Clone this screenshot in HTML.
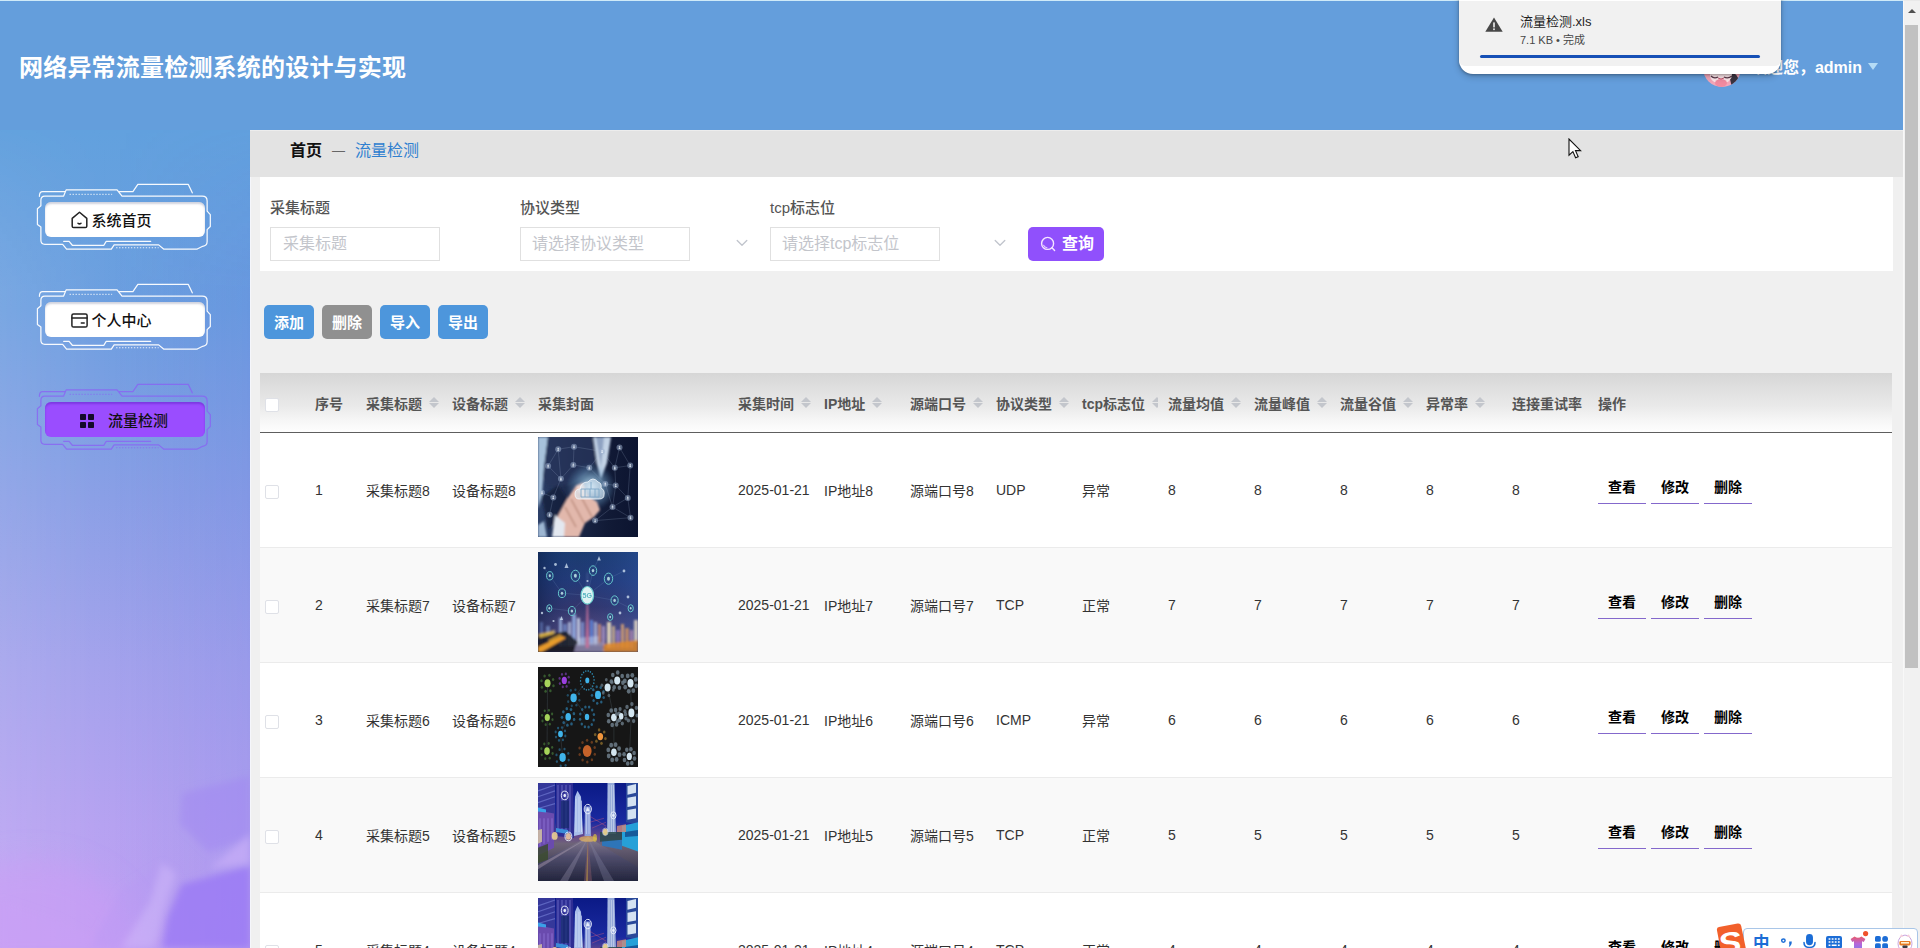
<!DOCTYPE html>
<html lang="zh-CN">
<head>
<meta charset="utf-8">
<title>网络异常流量检测系统的设计与实现</title>
<style>
*{box-sizing:border-box;margin:0;padding:0}
html,body{width:1920px;height:948px;overflow:hidden;background:#f0f0f0}
body{position:relative;font-family:"Liberation Sans","Noto Sans CJK SC",sans-serif;font-size:14px;color:#333}
.abs{position:absolute}
/* header */
#header{position:absolute;left:0;top:0;width:1903px;height:130px;background:#649edc;border-top:1px solid #cfeaf8}
#title{position:absolute;left:19px;top:49px;font-size:24px;line-height:36px;font-weight:700;color:#fff;white-space:nowrap;letter-spacing:.2px}
#user{position:absolute;right:41px;top:49px;height:36px;line-height:36px;font-size:16px;font-weight:700;color:#fff;white-space:nowrap}
#avatar{position:absolute;left:1702px;top:47px;width:40px;height:40px}
#caret{position:absolute;left:1868px;top:62px;width:0;height:0;border-left:5.5px solid transparent;border-right:5.5px solid transparent;border-top:7.5px solid #b5dcf6}
/* sidebar */
#side{position:absolute;left:0;top:130px;width:250px;height:818px;overflow:hidden;background:linear-gradient(180deg,#62a1de 0%,#6d9fe0 22%,#8a9fe6 45%,#a3a2ec 65%,#b6a2f1 85%,#bf9ff3 100%)}
#side .shade{position:absolute;left:0;top:0;width:250px;height:818px;background:linear-gradient(90deg,rgba(255,255,255,.09) 0%,rgba(255,255,255,0) 45%,rgba(70,90,220,.10) 100%);-webkit-mask-image:linear-gradient(180deg,rgba(0,0,0,.15) 0,#000 160px);mask-image:linear-gradient(180deg,rgba(0,0,0,.15) 0,#000 160px)}
.menu{position:absolute;left:30px;width:190px;height:80px}
.menu svg.frame{position:absolute;left:0;top:0;width:190px;height:80px}
.menu .box{position:absolute;left:15px;top:27px;width:160px;height:35px;border-radius:6px;background:#fff;box-shadow:inset 0 2px 2px rgba(120,130,160,.35)}
.menu .txt{position:absolute;top:28px;height:35px;line-height:35px;font-size:15px;color:#111;font-weight:500;white-space:nowrap}
.menu svg.ico{position:absolute}
.menu.act .box{background:#9a4dff;box-shadow:inset 0 2px 2px rgba(90,30,190,.45)}
/* main */
#crumb{position:absolute;left:250px;top:130px;width:1653px;height:47px;background:#e3e3e3;border-top:1px solid #ededed}
#crumb span{position:absolute;top:8px;line-height:24px;font-size:16px;white-space:nowrap}
#search{position:absolute;left:260px;top:177px;width:1633px;height:94px;background:#fff}
.lab{position:absolute;top:20px;font-size:15px;line-height:22px;color:#555;font-weight:500;white-space:nowrap}
.inp{position:absolute;top:50px;width:170px;height:34px;border:1px solid #e0e0e0;background:#fff;color:#c3c5cb;font-size:16px;line-height:31px;padding-left:12px;white-space:nowrap;overflow:hidden}
.arr{position:absolute;top:62px;width:12px;height:8px}
#query{position:absolute;left:768px;top:50px;width:76px;height:34px;border-radius:5px;background:#9050fc;color:#fff;font-size:16px;font-weight:700;line-height:34px;white-space:nowrap}
.btn{position:absolute;top:305px;width:50px;height:34px;border-radius:5px;background:#4d96dc;color:#fff;font-size:15px;font-weight:700;line-height:36px;text-align:center;white-space:nowrap}
/* table */
#tbl{position:absolute;left:260px;top:373px;width:1632px;border-collapse:collapse;table-layout:fixed;background:#fff}
#tbl th{height:59px;padding:1px 0 0 10px;text-align:left;font-size:14px;font-weight:700;color:#555;white-space:nowrap;overflow:hidden;position:relative}
#tbl thead tr{background:linear-gradient(180deg,#d6d6d6 0%,#dfdfdf 25%,#e9e9e9 55%,#f7f7f7 82%,#fefefe 100%)}
#tbl thead{border-bottom:1px solid #5e5e5e}
#tbl td{height:115px;padding:0 0 0 10px;font-size:14px;color:#333;white-space:nowrap;overflow:hidden;border-bottom:1px solid #ebebeb;vertical-align:middle}
#tbl tbody tr:nth-child(even) td{background:#f9f9f9}
.cb{display:block;width:14px;height:14px;border:1px solid #dfe1e7;border-radius:2px;background:#fff;margin-left:-5px;position:relative;top:2px}
.sort{display:inline-block;position:relative;width:10px;height:12px;margin-left:7px;vertical-align:0}
.sort:before,.sort:after{content:"";position:absolute;left:0;border-left:5px solid transparent;border-right:5px solid transparent}
.sort:before{top:0;border-bottom:5px solid #c3c6cc}
.sort:after{top:6.5px;border-top:5px solid #c3c6cc}
.pic{display:block;width:100px;height:100px;margin-top:-6px}
.op{display:inline-block;width:48px;height:34px;margin-right:5px;border-bottom:1px solid #8468cc;color:#000;font-weight:700;font-size:14px;line-height:34px;text-align:center;position:relative;top:-3px}
/* scrollbar */
#sb{position:absolute;left:1903px;top:0;width:17px;height:948px;background:#f1f1f1;border-left:1px solid #f8f8f8;border-top:1px solid #e9e9e9}
#sb .thumb{position:absolute;left:1px;top:24px;width:13px;height:643px;background:#c1c1c1}
#sb .up{position:absolute;left:3.5px;top:7.5px;width:0;height:0;border-left:4px solid transparent;border-right:4px solid transparent;border-bottom:4.5px solid #505050}
/* download bubble */
#dl{position:absolute;left:1459px;top:-14px;width:322px;height:88px;border-radius:14px;background:#fff;box-shadow:0 1px 3px rgba(0,0,0,.30),0 3px 6px 1px rgba(0,0,0,.14);overflow:hidden}
#dl .in{position:absolute;left:0;top:15px;width:322px;height:65px;background:#f1f1f1;border-radius:0 0 6px 6px}
#dl .n{position:absolute;left:61px;top:27px;font-size:13px;line-height:18px;color:#1f1f1f;white-space:nowrap}
#dl .s{position:absolute;left:61px;top:46px;font-size:11px;line-height:16px;color:#474747;white-space:nowrap}
#dl .bar{position:absolute;left:21px;top:69px;width:280px;height:3px;border-radius:2px;background:#1650b6}
#dl svg{position:absolute;left:26px;top:31px;width:18px;height:15px}
/* ime */
#ime{position:absolute;left:1743px;top:928px;width:175px;height:30px;border:1px solid #a9c6e8;border-radius:4px;background:#fff}
#ime .zh{position:absolute;left:9px;top:4px;font-size:16.5px;line-height:20px;font-weight:700;color:#1c6dd6}
#sogou{position:absolute;left:1715px;top:923px;width:34px;height:34px}
#cursor{position:absolute;left:1568px;top:138px;width:14px;height:21px}
#ll{position:absolute;left:250px;top:177px;width:1px;height:771px;background:#f5f6fb}
</style>
</head>
<body>
<div id="header">
  <div id="title">网络异常流量检测系统的设计与实现</div>
  <svg id="avatar" viewBox="0 0 40 40"><clipPath id="avc"><circle cx="20" cy="20" r="19"/></clipPath><g clip-path="url(#avc)"><rect width="40" height="40" fill="#f3a6b8"/><path d="M26 22 Q36 24 40 40 L30 40 Z" fill="#3a3340"/><ellipse cx="19" cy="27" rx="11" ry="9" fill="#fbe6ea"/><path d="M9 28 q3 3 7 1 M22 29 q4 2 8 -1" stroke="#5a3a4a" stroke-width="1.2" fill="none"/><ellipse cx="19" cy="35" rx="6" ry="4" fill="#f08aa0"/><path d="M16 30 q3 2 6 0" stroke="#c85a70" stroke-width="1" fill="none"/></g></svg>
  <div id="user">欢迎您，admin</div>
  <div id="caret"></div>
</div>
<div id="side"><div class="shade"></div><svg style="position:absolute;left:0;top:0;width:250px;height:818px" viewBox="0 0 250 818"><filter id="wb" x="-10%" y="-10%" width="120%" height="120%"><feGaussianBlur stdDeviation="3.5"/></filter><filter id="wb2" x="-20%" y="-20%" width="140%" height="140%"><feGaussianBlur stdDeviation="14"/></filter>
<ellipse cx="30" cy="820" rx="110" ry="90" fill="#cf9cf6" fill-opacity=".45" filter="url(#wb2)"/>
<g filter="url(#wb)"><path d="M182 663 L250 646 L250 708 L208 722 L180 694 Z" fill="#9f88f2" fill-opacity=".5"/><path d="M250 704 L210 738 L250 734 Z" fill="#c7aef8" fill-opacity=".7"/><path d="M182 754 L250 736 L250 818 L162 818 L168 786 Z" fill="#9877f6" fill-opacity=".75"/><path d="M162 733 L176 744 L167 770 L154 818 L122 818 L150 772 Z" fill="#ccb4f8" fill-opacity=".6"/><path d="M120 760 L160 735 L150 772 L118 818 L90 818 Z" fill="#b898f4" fill-opacity=".35"/><path d="M0 770 L60 790 L110 818 L0 818 Z" fill="#c8a0f6" fill-opacity=".35"/></g></svg>
<div class="menu" style="top:45px"><svg class="frame" viewBox="0 0 1920 808" fill="none" stroke="#fff" stroke-opacity=".95" stroke-width="12.5" stroke-linejoin="round" stroke-linecap="round">
<path d="M150 213 L340 213 L365 150 L880 150 L930 213 L1740 213 Q1790 213 1790 262 L1790 365 L1822 400 L1822 520 L1790 552 L1790 672 Q1790 716 1745 720 L1690 748 L1350 748 L1300 706 L850 706 L822 748 L370 748 L330 700 L150 700 Q110 700 110 660 L110 525 L75 500 L75 340 L110 310 L110 255 Q110 213 150 213 Z"/>
<path d="M95 215 Q95 168 128 168 L350 168 M905 168 L1040 168 L1090 95 L1600 95 L1640 180"/>
<path d="M340 670 L395 670 L430 712 L745 712 L770 670 L1220 670"/>
<path d="M400 195 L830 195 M870 735 L1300 735" stroke-dasharray="14 16" stroke-linecap="butt" stroke-width="9"/>
</svg><div class="box"></div><svg class="ico" style="left:41px;top:36px;width:17px;height:18px" viewBox="0 0 17 18" fill="none" stroke="#222" stroke-width="1.5" stroke-linejoin="round" stroke-linecap="round"><path d="M1.2 7.4 L8.5 1.2 L15.8 7.4 L15.8 15.2 Q15.8 16.6 14.4 16.6 L2.6 16.6 Q1.2 16.6 1.2 15.2 Z"/><path d="M7 12.2 Q8.5 13.6 10 12.2"/></svg><div class="txt" style="left:61.5px">系统首页</div></div>
<div class="menu" style="top:145px"><svg class="frame" viewBox="0 0 1920 808" fill="none" stroke="#fff" stroke-opacity=".95" stroke-width="12.5" stroke-linejoin="round" stroke-linecap="round">
<path d="M150 213 L340 213 L365 150 L880 150 L930 213 L1740 213 Q1790 213 1790 262 L1790 365 L1822 400 L1822 520 L1790 552 L1790 672 Q1790 716 1745 720 L1690 748 L1350 748 L1300 706 L850 706 L822 748 L370 748 L330 700 L150 700 Q110 700 110 660 L110 525 L75 500 L75 340 L110 310 L110 255 Q110 213 150 213 Z"/>
<path d="M95 215 Q95 168 128 168 L350 168 M905 168 L1040 168 L1090 95 L1600 95 L1640 180"/>
<path d="M340 670 L395 670 L430 712 L745 712 L770 670 L1220 670"/>
<path d="M400 195 L830 195 M870 735 L1300 735" stroke-dasharray="14 16" stroke-linecap="butt" stroke-width="9"/>
</svg><div class="box"></div><svg class="ico" style="left:41px;top:38px;width:17px;height:15px" viewBox="0 0 17 15" fill="none" stroke="#222" stroke-width="1.5" stroke-linejoin="round" stroke-linecap="round"><rect x="0.9" y="0.9" width="15.2" height="13.2" rx="1.6"/><path d="M0.9 5 L16.1 5 M10.3 10 L13.2 10"/></svg><div class="txt" style="left:61.5px">个人中心</div></div>
<div class="menu act" style="top:245px"><svg class="frame" viewBox="0 0 1920 808" fill="none" stroke="#8a5cf5" stroke-opacity=".72" stroke-width="12.5" stroke-linejoin="round" stroke-linecap="round">
<path d="M150 213 L340 213 L365 150 L880 150 L930 213 L1740 213 Q1790 213 1790 262 L1790 365 L1822 400 L1822 520 L1790 552 L1790 672 Q1790 716 1745 720 L1690 748 L1350 748 L1300 706 L850 706 L822 748 L370 748 L330 700 L150 700 Q110 700 110 660 L110 525 L75 500 L75 340 L110 310 L110 255 Q110 213 150 213 Z"/>
<path d="M95 215 Q95 168 128 168 L350 168 M905 168 L1040 168 L1090 95 L1600 95 L1640 180"/>
<path d="M340 670 L395 670 L430 712 L745 712 L770 670 L1220 670"/>
<path d="M400 195 L830 195 M870 735 L1300 735" stroke-dasharray="14 16" stroke-linecap="butt" stroke-width="9"/>
</svg><div class="box"></div><svg class="ico" style="left:50px;top:39px;width:14px;height:14px" viewBox="0 0 14 14" fill="#140a2a"><rect x="0" y="0" width="6" height="6" rx="0.8"/><rect x="8" y="0" width="6" height="6" rx="0.8"/><rect x="0" y="8" width="6" height="6" rx="0.8"/><rect x="8" y="8" width="6" height="6" rx="0.8"/></svg><div class="txt" style="left:78px">流量检测</div></div>
</div>
<div id="crumb"><span style="left:40px;font-weight:700;color:#111">首页</span><span style="left:82px;color:#666;font-size:13px">—</span><span style="left:105px;color:#2f80d0">流量检测</span></div>
<div id="search">
<div class="lab" style="left:10px">采集标题</div><div class="inp" style="left:10px">采集标题</div>
<div class="lab" style="left:260px">协议类型</div><div class="inp" style="left:260px;padding-left:11px">请选择协议类型</div><svg class="arr" style="left:476px" viewBox="0 0 12 8" fill="none" stroke="#c0c4cc" stroke-width="1.3" stroke-linecap="round" stroke-linejoin="round"><path d="M1.2 1.5 L6 6.3 L10.8 1.5"/></svg>
<div class="lab" style="left:510px">tcp标志位</div><div class="inp" style="left:510px;padding-left:11px">请选择tcp标志位</div><svg class="arr" style="left:734px" viewBox="0 0 12 8" fill="none" stroke="#c0c4cc" stroke-width="1.3" stroke-linecap="round" stroke-linejoin="round"><path d="M1.2 1.5 L6 6.3 L10.8 1.5"/></svg>
<div id="query"><svg style="position:absolute;left:12px;top:9px;width:16px;height:16px" viewBox="0 0 16 16" fill="none" stroke="#f6e6ff" stroke-width="1.4" stroke-linecap="round"><circle cx="7.6" cy="7.4" r="6"/><path d="M12 11.8 L14.6 14.6"/><path d="M3.6 9.2 Q4.6 11.4 7 11.8" stroke-width="1.1" stroke-opacity=".8"/></svg><span style="position:absolute;left:34px;top:0">查询</span></div>
</div>
<div class="btn" style="left:264px">添加</div>
<div class="btn" style="left:322px;background:#909090">删除</div>
<div class="btn" style="left:380px">导入</div>
<div class="btn" style="left:438px">导出</div>

<table id="tbl"><colgroup><col style="width:45px"><col style="width:51px"><col style="width:86px"><col style="width:86px"><col style="width:200px"><col style="width:86px"><col style="width:86px"><col style="width:86px"><col style="width:86px"><col style="width:86px"><col style="width:86px"><col style="width:86px"><col style="width:86px"><col style="width:86px"><col style="width:86px"><col style="width:304px"></colgroup>
<thead><tr><th><span class="cb"></span></th><th>序号</th><th>采集标题<i class="sort"></i></th><th>设备标题<i class="sort"></i></th><th>采集封面</th><th>采集时间<i class="sort"></i></th><th>IP地址<i class="sort"></i></th><th>源端口号<i class="sort"></i></th><th>协议类型<i class="sort"></i></th><th>tcp标志位<i class="sort"></i></th><th>流量均值<i class="sort"></i></th><th>流量峰值<i class="sort"></i></th><th>流量谷值<i class="sort"></i></th><th>异常率<i class="sort"></i></th><th>连接重试率<i class="sort"></i></th><th>操作</th></tr></thead>
<tbody>
<tr><td><span class="cb"></span></td><td>1</td><td>采集标题8</td><td>设备标题8</td><td><svg class="pic" viewBox="0 0 100 100"><defs><linearGradient id="p1a" x1="0" y1="0" x2="1" y2="0"><stop offset="0" stop-color="#2c4068"/><stop offset=".35" stop-color="#1b2747"/><stop offset=".7" stop-color="#111a36"/><stop offset="1" stop-color="#0c1430"/></linearGradient><radialGradient id="p1b" cx=".5" cy=".5" r=".5"><stop offset="0" stop-color="#d6ecfa" stop-opacity=".95"/><stop offset=".45" stop-color="#8fc0e2" stop-opacity=".6"/><stop offset="1" stop-color="#5c93c4" stop-opacity="0"/></radialGradient><filter id="p1f" x="-10%" y="-10%" width="120%" height="120%"><feGaussianBlur stdDeviation="1.1"/></filter><filter id="p1g"><feGaussianBlur stdDeviation=".5"/></filter><clipPath id="p1c"><rect width="100" height="100"/></clipPath></defs><g clip-path="url(#p1c)"><rect width="100" height="100" fill="url(#p1a)"/><g filter="url(#p1f)"><path d="M0 0 L10 0 L6 30 L4 58 L0 72 Z" fill="#a7c2dc"/><path d="M0 88 L6 84 L9 100 L0 100 Z" fill="#9db6d2"/><path d="M10 0 L54 0 L58 26 L45 40 L30 48 L10 50 L5 40 Z" fill="#25345a" opacity=".8"/><path d="M55 0 L73 0 L69 26 L63 42 L59 28 Z" fill="#c3d3e6"/><path d="M58 0 L66 0 L63 30 Z" fill="#8fa3c2"/><path d="M4 60 L20 48 L30 62 L22 84 L10 92 Z" fill="#121a36" opacity=".7"/><ellipse cx="53" cy="50" rx="25" ry="24" fill="url(#p1b)"/><path d="M18 100 L17 84 L29 62 L38 49 L45 46 L49 58 L59 65 L62 73 L56 80 L47 86 L41 100 Z" fill="#e2b8ac"/><path d="M38 49 L45 46 L49 58 L44 62 Z" fill="#f2d8d0"/><path d="M27 70 L38 90 M33 62 L46 86 M41 56 L54 80" stroke="#b98878" stroke-width="1.4" fill="none"/><path d="M14 100 L17 78 L27 86 L26 100 Z" fill="#e3e8f0"/></g><g filter="url(#p1g)"><path d="M41 62 Q37 62 37 57 Q37 52 42 52 Q43 45 50 45 Q55 39 60 45 Q64 46 63 51 Q67 53 66 58 Q66 62 61 62 Z" fill="#dcedf8" fill-opacity=".6" stroke="#f4faff" stroke-opacity=".9" stroke-width=".9"/><path d="M43 52 h18 v8 h-18 z M47 52 v8 M52 52 v8 M57 52 v8 M53 45 v7" stroke="#7fa8c8" stroke-width=".9" fill="none"/><g stroke="#a9c0dc" stroke-opacity=".38" stroke-width=".5"><path d="M20.2 12.2 L36 9.7"/><path d="M20.2 12.2 L10.1 29"/><path d="M36 9.7 L35.3 27.9"/><path d="M35.3 27.9 L51.3 30.8"/><path d="M10.1 29 L22.9 41.8"/><path d="M22.9 41.8 L35.3 27.9"/><path d="M22.9 41.8 L15.3 60.4"/><path d="M4 55.7 L15.3 60.4"/><path d="M15.3 60.4 L11.6 77.8"/><path d="M51.3 30.8 L64.1 14.5"/><path d="M64.1 14.5 L76.8 30.8"/><path d="M76.8 30.8 L92.2 28.5"/><path d="M76.8 30.8 L77.7 48.4"/><path d="M77.7 48.4 L67.3 47"/><path d="M77.7 48.4 L89.8 61"/><path d="M89.8 61 L74.5 70"/><path d="M74.5 70 L92.5 80.7"/><path d="M74.5 70 L57.1 83.6"/><path d="M92.2 28.5 L81.5 10.5"/><path d="M81.5 10.5 L76.8 30.8"/><path d="M51.3 30.8 L67.3 47"/><path d="M67.3 47 L74.5 70"/><path d="M77.7 48.4 L74.5 70"/><path d="M89.8 61 L92.5 80.7"/><path d="M57.1 83.6 L92.5 80.7"/><path d="M36 9.7 L64.1 14.5"/><path d="M20.2 12.2 L22.9 41.8"/><path d="M92.2 28.5 L89.8 61"/></g><g fill="#9fb4d2" fill-opacity=".5"><circle cx="20.2" cy="12.2" r="3"/><circle cx="36" cy="9.7" r="3"/><circle cx="10.1" cy="29" r="3"/><circle cx="35.3" cy="27.9" r="3"/><circle cx="51.3" cy="30.8" r="3"/><circle cx="22.9" cy="41.8" r="3"/><circle cx="4" cy="55.7" r="3"/><circle cx="15.3" cy="60.4" r="3"/><circle cx="11.6" cy="77.8" r="3"/><circle cx="64.1" cy="14.5" r="3"/><circle cx="76.8" cy="30.8" r="3"/><circle cx="92.2" cy="28.5" r="3"/><circle cx="77.7" cy="48.4" r="3"/><circle cx="67.3" cy="47" r="3"/><circle cx="89.8" cy="61" r="3"/><circle cx="74.5" cy="70" r="3"/><circle cx="92.5" cy="80.7" r="3"/><circle cx="57.1" cy="83.6" r="3"/><circle cx="81.5" cy="10.5" r="3"/></g><g fill="#eef4fb" fill-opacity=".8"><circle cx="20.2" cy="11.6" r=".8"/><rect x="19.3" y="12.5" width="1.8" height="1.3" rx=".5"/><circle cx="36" cy="9.1" r=".8"/><rect x="35.1" y="10.0" width="1.8" height="1.3" rx=".5"/><circle cx="10.1" cy="28.4" r=".8"/><rect x="9.2" y="29.3" width="1.8" height="1.3" rx=".5"/><circle cx="35.3" cy="27.299999999999997" r=".8"/><rect x="34.4" y="28.2" width="1.8" height="1.3" rx=".5"/><circle cx="51.3" cy="30.2" r=".8"/><rect x="50.4" y="31.1" width="1.8" height="1.3" rx=".5"/><circle cx="22.9" cy="41.199999999999996" r=".8"/><rect x="22.0" y="42.099999999999994" width="1.8" height="1.3" rx=".5"/><circle cx="4" cy="55.1" r=".8"/><rect x="3.1" y="56.0" width="1.8" height="1.3" rx=".5"/><circle cx="15.3" cy="59.8" r=".8"/><rect x="14.4" y="60.699999999999996" width="1.8" height="1.3" rx=".5"/><circle cx="11.6" cy="77.2" r=".8"/><rect x="10.7" y="78.1" width="1.8" height="1.3" rx=".5"/><circle cx="64.1" cy="13.9" r=".8"/><rect x="63.199999999999996" y="14.8" width="1.8" height="1.3" rx=".5"/><circle cx="76.8" cy="30.2" r=".8"/><rect x="75.89999999999999" y="31.1" width="1.8" height="1.3" rx=".5"/><circle cx="92.2" cy="27.9" r=".8"/><rect x="91.3" y="28.8" width="1.8" height="1.3" rx=".5"/><circle cx="77.7" cy="47.8" r=".8"/><rect x="76.8" y="48.699999999999996" width="1.8" height="1.3" rx=".5"/><circle cx="67.3" cy="46.4" r=".8"/><rect x="66.39999999999999" y="47.3" width="1.8" height="1.3" rx=".5"/><circle cx="89.8" cy="60.4" r=".8"/><rect x="88.89999999999999" y="61.3" width="1.8" height="1.3" rx=".5"/><circle cx="74.5" cy="69.4" r=".8"/><rect x="73.6" y="70.3" width="1.8" height="1.3" rx=".5"/><circle cx="92.5" cy="80.10000000000001" r=".8"/><rect x="91.6" y="81.0" width="1.8" height="1.3" rx=".5"/><circle cx="57.1" cy="83.0" r=".8"/><rect x="56.2" y="83.89999999999999" width="1.8" height="1.3" rx=".5"/><circle cx="81.5" cy="9.9" r=".8"/><rect x="80.6" y="10.8" width="1.8" height="1.3" rx=".5"/></g></g></g></svg></td><td>2025-01-21</td><td>IP地址8</td><td>源端口号8</td><td>UDP</td><td>异常</td><td>8</td><td>8</td><td>8</td><td>8</td><td>8</td><td><span class="op" style="margin-left:0">查看</span><span class="op">修改</span><span class="op">删除</span></td></tr>
<tr><td><span class="cb"></span></td><td>2</td><td>采集标题7</td><td>设备标题7</td><td><svg class="pic" viewBox="0 0 100 100"><defs><linearGradient id="p2a" x1="0" y1="0" x2="0" y2="1"><stop offset="0" stop-color="#1b3c70"/><stop offset=".3" stop-color="#243a78"/><stop offset=".55" stop-color="#34366c"/><stop offset=".72" stop-color="#4d4478"/><stop offset=".85" stop-color="#5a4a80"/><stop offset="1" stop-color="#3a3048"/></linearGradient><linearGradient id="p2b" x1="0" y1="0" x2="1" y2="0"><stop offset="0" stop-color="#0c1f48" stop-opacity=".55"/><stop offset=".4" stop-color="#1e3f86" stop-opacity="0"/><stop offset="1" stop-color="#2f56a6" stop-opacity=".45"/></linearGradient><filter id="p2f" x="-10%" y="-10%" width="120%" height="120%"><feGaussianBlur stdDeviation="1"/></filter><filter id="p2g"><feGaussianBlur stdDeviation=".45"/></filter><clipPath id="p2c"><rect width="100" height="100"/></clipPath></defs><g clip-path="url(#p2c)"><rect width="100" height="100" fill="url(#p2a)"/><rect width="100" height="100" fill="url(#p2b)"/><g filter="url(#p2f)"><rect x="2" y="70" width="3" height="22" fill="#6f8fd0" fill-opacity="0.5"/><rect x="8" y="74" width="4" height="20" fill="#8fb0e8" fill-opacity="0.55"/><rect x="14" y="78" width="3" height="14" fill="#f0d080" fill-opacity="0.6"/><rect x="21" y="66" width="3" height="28" fill="#a8c4f0" fill-opacity="0.75"/><rect x="25" y="72" width="4" height="22" fill="#7fa0e0" fill-opacity="0.6"/><rect x="30" y="70" width="3" height="24" fill="#c8d8f4" fill-opacity="0.7"/><rect x="34" y="62" width="4" height="32" fill="#9ab8ec" fill-opacity="0.8"/><rect x="39" y="66" width="3" height="28" fill="#d8e6f8" fill-opacity="0.8"/><rect x="43" y="70" width="3" height="24" fill="#8aa6e4" fill-opacity="0.7"/><rect x="52" y="68" width="3" height="26" fill="#5f8ae0" fill-opacity="0.85"/><rect x="56" y="70" width="3" height="24" fill="#c0d0f0" fill-opacity="0.7"/><rect x="60" y="72" width="3" height="22" fill="#e8a070" fill-opacity="0.7"/><rect x="64" y="74" width="3" height="20" fill="#d0b8e0" fill-opacity="0.6"/><rect x="69" y="70" width="4" height="26" fill="#f0e4c0" fill-opacity="0.85"/><rect x="74" y="74" width="3" height="22" fill="#e8c890" fill-opacity="0.7"/><rect x="78" y="78" width="4" height="18" fill="#b090d0" fill-opacity="0.6"/><rect x="83" y="72" width="3" height="24" fill="#f0b070" fill-opacity="0.75"/><rect x="87" y="76" width="4" height="20" fill="#e8a060" fill-opacity="0.7"/><rect x="92" y="78" width="3" height="18" fill="#d8a0c0" fill-opacity="0.6"/><rect x="96" y="68" width="4" height="22" fill="#e4d8c4" fill-opacity="0.85"/><path d="M0 84 L28 79 L40 90 L36 100 L0 100 Z" fill="#15151e" fill-opacity=".85"/><path d="M0 95 L24 84 L28 86 L4 100 L0 100 Z" fill="#e89a2a"/><path d="M0 82 L14 79 L16 82 L2 86 Z" fill="#f0c040" fill-opacity=".8"/><path d="M10 88 L22 82 L24 84 L12 91 Z" fill="#f2b030" fill-opacity=".7"/><path d="M66 92 L100 88 L100 100 L64 100 Z" fill="#e08828" fill-opacity=".85"/><path d="M38 92 L64 90 L66 100 L36 100 Z" fill="#8c88aa" fill-opacity=".8"/><path d="M40 86 L60 84 L60 92 L40 93 Z" fill="#c8d4f0" fill-opacity=".5"/><path d="M48.7 52 L50.1 52 L51 96 L47.6 96 Z" fill="#c0709a"/><path d="M49 20 L49.8 20 L50 36 L48.8 36 Z" fill="#6b7fb8" fill-opacity=".6"/></g><g filter="url(#p2g)"><g stroke="#8fb0d8" stroke-opacity=".3" stroke-width=".5" fill="none"><path d="M49.3 43.3 L37.4 23.8 M49.3 43.3 L55 18.6 M49.3 43.3 L70.5 26.7 M49.3 43.3 L24 41.2 M49.3 43.3 L76.6 48.4 M49.3 43.3 L33.9 59 M24 41.2 L11.8 23.8 M33.9 59 L11.3 56.3 M76.6 48.4 L92.7 56.3 M70.5 26.7 L86 19 M55 18.6 L61 6 M11.8 23.8 L6.5 16"/></g><g stroke="#66c6cc" stroke-width="1" fill="#2a4a80" fill-opacity=".35"><ellipse cx="11.8" cy="23.8" rx="3.2" ry="4.2"/><ellipse cx="37.4" cy="23.8" rx="4.3" ry="5.6"/><ellipse cx="55" cy="18.6" rx="3.7" ry="4.8"/><ellipse cx="70.5" cy="26.7" rx="4.2" ry="5.6"/><ellipse cx="24" cy="41.2" rx="3.6" ry="4.4"/><ellipse cx="76.6" cy="48.4" rx="3.6" ry="4.6"/><ellipse cx="33.9" cy="59" rx="3.6" ry="4.6"/><ellipse cx="11.3" cy="56.3" rx="2.6" ry="3.6"/><ellipse cx="92.7" cy="56.3" rx="2.6" ry="3.6"/><ellipse cx="72.2" cy="65" rx="2.6" ry="3.4"/></g><g fill="#bfe6ea" fill-opacity=".85"><ellipse cx="11.8" cy="23.8" rx="1.1199999999999999" ry="1.47"/><ellipse cx="37.4" cy="23.8" rx="1.505" ry="1.9599999999999997"/><ellipse cx="55" cy="18.6" rx="1.295" ry="1.68"/><ellipse cx="70.5" cy="26.7" rx="1.47" ry="1.9599999999999997"/><ellipse cx="24" cy="41.2" rx="1.26" ry="1.54"/><ellipse cx="76.6" cy="48.4" rx="1.26" ry="1.6099999999999999"/><ellipse cx="33.9" cy="59" rx="1.26" ry="1.6099999999999999"/><ellipse cx="11.3" cy="56.3" rx="0.9099999999999999" ry="1.26"/><ellipse cx="92.7" cy="56.3" rx="0.9099999999999999" ry="1.26"/><ellipse cx="72.2" cy="65" rx="0.9099999999999999" ry="1.19"/></g><ellipse cx="49.3" cy="43.3" rx="6.2" ry="8.8" fill="#dff3f4" stroke="#6fd0d0" stroke-width="1.2"/><text x="49.3" y="46.2" font-size="7.5" font-weight="700" text-anchor="middle" textLength="9.5" lengthAdjust="spacingAndGlyphs" font-family="Liberation Sans, sans-serif" fill="#5ab6c2">5G</text><g fill="#d6e6f6" fill-opacity=".75"><path d="M28.5 11 l2 5 h-4 z"/><path d="M61 4 l1.8 4.6 h-3.6 z"/><path d="M23.5 64 l1.6 4 h-3.2 z"/><circle cx="6.5" cy="16" r="1.2"/><circle cx="17.5" cy="12.5" r="1.4"/><circle cx="86" cy="19" r="1.4"/><circle cx="90" cy="45" r="1.4"/><circle cx="82" cy="61" r="1.4"/><circle cx="4" cy="61" r="1.2"/><circle cx="15.5" cy="69" r="1.1"/><circle cx="49.5" cy="29" r="1.1"/></g></g></g></svg></td><td>2025-01-21</td><td>IP地址7</td><td>源端口号7</td><td>TCP</td><td>正常</td><td>7</td><td>7</td><td>7</td><td>7</td><td>7</td><td><span class="op" style="margin-left:0">查看</span><span class="op">修改</span><span class="op">删除</span></td></tr>
<tr><td><span class="cb"></span></td><td>3</td><td>采集标题6</td><td>设备标题6</td><td><svg class="pic" viewBox="0 0 100 100"><defs><filter id="p3g"><feGaussianBlur stdDeviation=".55"/></filter><clipPath id="p3c"><rect width="100" height="100"/></clipPath></defs><g clip-path="url(#p3c)"><rect width="100" height="100" fill="#161616"/><g filter="url(#p3g)"><g stroke="#5a6a74" stroke-opacity=".55" stroke-width=".5" fill="none"><path d="M9.5 16 L9.3 50 L9 84 M35.6 31 L49.3 13.4 L60 28 M35.6 31 L49 50 M69.6 20.6 L79.2 13.4 L92.5 16.3 L93.4 46 L91.3 89 L75.9 85.3 L75.9 50.5 L69.6 20.6 M30.2 50 L22.5 67 L24.6 90"/></g><ellipse cx="15.5" cy="18.8" rx="1.2" ry="1.50" fill="#3f6a34" fill-opacity="0.8"/><ellipse cx="12.4" cy="23.7" rx="1.2" ry="1.50" fill="#3f6a34" fill-opacity="0.8"/><ellipse cx="7.6" cy="24.3" rx="1.2" ry="1.50" fill="#3f6a34" fill-opacity="0.8"/><ellipse cx="3.9" cy="20.2" rx="1.2" ry="1.50" fill="#3f6a34" fill-opacity="0.8"/><ellipse cx="3.5" cy="13.8" rx="1.2" ry="1.50" fill="#3f6a34" fill-opacity="0.8"/><ellipse cx="6.6" cy="8.9" rx="1.2" ry="1.50" fill="#3f6a34" fill-opacity="0.8"/><ellipse cx="11.4" cy="8.3" rx="1.2" ry="1.50" fill="#3f6a34" fill-opacity="0.8"/><ellipse cx="15.1" cy="12.4" rx="1.2" ry="1.50" fill="#3f6a34" fill-opacity="0.8"/><ellipse cx="9.5" cy="16.3" rx="3" ry="4" fill="#a6d45a"/><ellipse cx="14.5" cy="52.7" rx="1.1" ry="1.38" fill="#3f6a34" fill-opacity="0.8"/><ellipse cx="11.8" cy="57.2" rx="1.1" ry="1.38" fill="#3f6a34" fill-opacity="0.8"/><ellipse cx="7.7" cy="57.7" rx="1.1" ry="1.38" fill="#3f6a34" fill-opacity="0.8"/><ellipse cx="4.5" cy="54.0" rx="1.1" ry="1.38" fill="#3f6a34" fill-opacity="0.8"/><ellipse cx="4.1" cy="48.3" rx="1.1" ry="1.38" fill="#3f6a34" fill-opacity="0.8"/><ellipse cx="6.8" cy="43.8" rx="1.1" ry="1.38" fill="#3f6a34" fill-opacity="0.8"/><ellipse cx="10.9" cy="43.3" rx="1.1" ry="1.38" fill="#3f6a34" fill-opacity="0.8"/><ellipse cx="14.1" cy="47.0" rx="1.1" ry="1.38" fill="#3f6a34" fill-opacity="0.8"/><ellipse cx="9.3" cy="50.5" rx="2.6" ry="3.6" fill="#a6d45a"/><ellipse cx="14.6" cy="86.5" rx="1.1" ry="1.38" fill="#3f6a34" fill-opacity="0.8"/><ellipse cx="11.7" cy="91.2" rx="1.1" ry="1.38" fill="#3f6a34" fill-opacity="0.8"/><ellipse cx="7.3" cy="91.7" rx="1.1" ry="1.38" fill="#3f6a34" fill-opacity="0.8"/><ellipse cx="3.8" cy="87.8" rx="1.1" ry="1.38" fill="#3f6a34" fill-opacity="0.8"/><ellipse cx="3.4" cy="81.7" rx="1.1" ry="1.38" fill="#3f6a34" fill-opacity="0.8"/><ellipse cx="6.3" cy="77.0" rx="1.1" ry="1.38" fill="#3f6a34" fill-opacity="0.8"/><ellipse cx="10.7" cy="76.5" rx="1.1" ry="1.38" fill="#3f6a34" fill-opacity="0.8"/><ellipse cx="14.2" cy="80.4" rx="1.1" ry="1.38" fill="#3f6a34" fill-opacity="0.8"/><ellipse cx="9" cy="84.1" rx="2.8" ry="3.8" fill="#a6d45a"/><ellipse cx="31.0" cy="15.4" rx="1.1" ry="1.38" fill="#6a3a9a" fill-opacity="0.8"/><ellipse cx="28.6" cy="19.4" rx="1.1" ry="1.38" fill="#6a3a9a" fill-opacity="0.8"/><ellipse cx="24.8" cy="19.9" rx="1.1" ry="1.38" fill="#6a3a9a" fill-opacity="0.8"/><ellipse cx="21.9" cy="16.6" rx="1.1" ry="1.38" fill="#6a3a9a" fill-opacity="0.8"/><ellipse cx="21.6" cy="11.4" rx="1.1" ry="1.38" fill="#6a3a9a" fill-opacity="0.8"/><ellipse cx="24.0" cy="7.4" rx="1.1" ry="1.38" fill="#6a3a9a" fill-opacity="0.8"/><ellipse cx="27.8" cy="6.9" rx="1.1" ry="1.38" fill="#6a3a9a" fill-opacity="0.8"/><ellipse cx="30.7" cy="10.2" rx="1.1" ry="1.38" fill="#6a3a9a" fill-opacity="0.8"/><ellipse cx="26.3" cy="13.4" rx="2.6" ry="3.6" fill="#9b3fe0"/><ellipse cx="55.8" cy="16.2" rx="0.7" ry="0.88" fill="#2f8fb8" fill-opacity="0.9"/><ellipse cx="54.7" cy="19.2" rx="0.7" ry="0.88" fill="#2f8fb8" fill-opacity="0.9"/><ellipse cx="53.0" cy="21.4" rx="0.7" ry="0.88" fill="#2f8fb8" fill-opacity="0.9"/><ellipse cx="50.8" cy="22.7" rx="0.7" ry="0.88" fill="#2f8fb8" fill-opacity="0.9"/><ellipse cx="48.4" cy="22.8" rx="0.7" ry="0.88" fill="#2f8fb8" fill-opacity="0.9"/><ellipse cx="46.2" cy="21.9" rx="0.7" ry="0.88" fill="#2f8fb8" fill-opacity="0.9"/><ellipse cx="44.3" cy="19.9" rx="0.7" ry="0.88" fill="#2f8fb8" fill-opacity="0.9"/><ellipse cx="43.0" cy="17.1" rx="0.7" ry="0.88" fill="#2f8fb8" fill-opacity="0.9"/><ellipse cx="42.5" cy="13.9" rx="0.7" ry="0.88" fill="#2f8fb8" fill-opacity="0.9"/><ellipse cx="42.8" cy="10.6" rx="0.7" ry="0.88" fill="#2f8fb8" fill-opacity="0.9"/><ellipse cx="43.9" cy="7.6" rx="0.7" ry="0.88" fill="#2f8fb8" fill-opacity="0.9"/><ellipse cx="45.6" cy="5.4" rx="0.7" ry="0.88" fill="#2f8fb8" fill-opacity="0.9"/><ellipse cx="47.8" cy="4.1" rx="0.7" ry="0.88" fill="#2f8fb8" fill-opacity="0.9"/><ellipse cx="50.2" cy="4.0" rx="0.7" ry="0.88" fill="#2f8fb8" fill-opacity="0.9"/><ellipse cx="52.4" cy="4.9" rx="0.7" ry="0.88" fill="#2f8fb8" fill-opacity="0.9"/><ellipse cx="54.3" cy="6.9" rx="0.7" ry="0.88" fill="#2f8fb8" fill-opacity="0.9"/><ellipse cx="55.6" cy="9.7" rx="0.7" ry="0.88" fill="#2f8fb8" fill-opacity="0.9"/><ellipse cx="56.1" cy="12.9" rx="0.7" ry="0.88" fill="#2f8fb8" fill-opacity="0.9"/><ellipse cx="49.3" cy="13.4" rx="2" ry="2.8" fill="#3fb4ea"/><ellipse cx="41.4" cy="33.3" rx="1.1" ry="1.38" fill="#2a6e96" fill-opacity="0.6"/><ellipse cx="38.4" cy="38.2" rx="1.1" ry="1.38" fill="#2a6e96" fill-opacity="0.6"/><ellipse cx="33.8" cy="38.8" rx="1.1" ry="1.38" fill="#2a6e96" fill-opacity="0.6"/><ellipse cx="30.2" cy="34.7" rx="1.1" ry="1.38" fill="#2a6e96" fill-opacity="0.6"/><ellipse cx="29.8" cy="28.3" rx="1.1" ry="1.38" fill="#2a6e96" fill-opacity="0.6"/><ellipse cx="32.8" cy="23.4" rx="1.1" ry="1.38" fill="#2a6e96" fill-opacity="0.6"/><ellipse cx="37.4" cy="22.8" rx="1.1" ry="1.38" fill="#2a6e96" fill-opacity="0.6"/><ellipse cx="41.0" cy="26.9" rx="1.1" ry="1.38" fill="#2a6e96" fill-opacity="0.6"/><ellipse cx="35.6" cy="30.8" rx="3.2" ry="4.4" fill="#3fb4ea"/><ellipse cx="65.7" cy="30.4" rx="1.2" ry="1.50" fill="#2a6e96" fill-opacity="0.8"/><ellipse cx="63.3" cy="35.0" rx="1.2" ry="1.50" fill="#2a6e96" fill-opacity="0.8"/><ellipse cx="59.2" cy="36.2" rx="1.2" ry="1.50" fill="#2a6e96" fill-opacity="0.8"/><ellipse cx="55.6" cy="33.6" rx="1.2" ry="1.50" fill="#2a6e96" fill-opacity="0.8"/><ellipse cx="54.0" cy="28.3" rx="1.2" ry="1.50" fill="#2a6e96" fill-opacity="0.8"/><ellipse cx="55.2" cy="22.8" rx="1.2" ry="1.50" fill="#2a6e96" fill-opacity="0.8"/><ellipse cx="58.7" cy="19.7" rx="1.2" ry="1.50" fill="#2a6e96" fill-opacity="0.8"/><ellipse cx="62.7" cy="20.4" rx="1.2" ry="1.50" fill="#2a6e96" fill-opacity="0.8"/><ellipse cx="65.5" cy="24.6" rx="1.2" ry="1.50" fill="#2a6e96" fill-opacity="0.8"/><ellipse cx="60" cy="27.9" rx="3" ry="4.2" fill="#3fb4ea"/><ellipse cx="36.1" cy="52.4" rx="1.3" ry="1.62" fill="#2a6e96" fill-opacity="0.8"/><ellipse cx="33.5" cy="56.9" rx="1.3" ry="1.62" fill="#2a6e96" fill-opacity="0.8"/><ellipse cx="29.4" cy="58.2" rx="1.3" ry="1.62" fill="#2a6e96" fill-opacity="0.8"/><ellipse cx="25.7" cy="55.6" rx="1.3" ry="1.62" fill="#2a6e96" fill-opacity="0.8"/><ellipse cx="24.0" cy="50.3" rx="1.3" ry="1.62" fill="#2a6e96" fill-opacity="0.8"/><ellipse cx="25.3" cy="44.8" rx="1.3" ry="1.62" fill="#2a6e96" fill-opacity="0.8"/><ellipse cx="28.8" cy="41.7" rx="1.3" ry="1.62" fill="#2a6e96" fill-opacity="0.8"/><ellipse cx="33.0" cy="42.5" rx="1.3" ry="1.62" fill="#2a6e96" fill-opacity="0.8"/><ellipse cx="35.9" cy="46.7" rx="1.3" ry="1.62" fill="#2a6e96" fill-opacity="0.8"/><ellipse cx="30.2" cy="49.9" rx="2.8" ry="3.8" fill="#3fb4ea"/><ellipse cx="55.7" cy="52.9" rx="1.2" ry="1.50" fill="#2a6e96" fill-opacity="0.8"/><ellipse cx="53.8" cy="57.4" rx="1.2" ry="1.50" fill="#2a6e96" fill-opacity="0.8"/><ellipse cx="50.6" cy="59.9" rx="1.2" ry="1.50" fill="#2a6e96" fill-opacity="0.8"/><ellipse cx="46.9" cy="59.7" rx="1.2" ry="1.50" fill="#2a6e96" fill-opacity="0.8"/><ellipse cx="43.8" cy="56.9" rx="1.2" ry="1.50" fill="#2a6e96" fill-opacity="0.8"/><ellipse cx="42.1" cy="52.2" rx="1.2" ry="1.50" fill="#2a6e96" fill-opacity="0.8"/><ellipse cx="42.3" cy="46.9" rx="1.2" ry="1.50" fill="#2a6e96" fill-opacity="0.8"/><ellipse cx="44.2" cy="42.4" rx="1.2" ry="1.50" fill="#2a6e96" fill-opacity="0.8"/><ellipse cx="47.4" cy="39.9" rx="1.2" ry="1.50" fill="#2a6e96" fill-opacity="0.8"/><ellipse cx="51.1" cy="40.1" rx="1.2" ry="1.50" fill="#2a6e96" fill-opacity="0.8"/><ellipse cx="54.2" cy="42.9" rx="1.2" ry="1.50" fill="#2a6e96" fill-opacity="0.8"/><ellipse cx="55.9" cy="47.6" rx="1.2" ry="1.50" fill="#2a6e96" fill-opacity="0.8"/><ellipse cx="49" cy="49.9" rx="2.2" ry="3.2" fill="#3fb4ea"/><ellipse cx="27.3" cy="69.0" rx="1.1" ry="1.38" fill="#2a6e96" fill-opacity="0.7"/><ellipse cx="24.9" cy="72.9" rx="1.1" ry="1.38" fill="#2a6e96" fill-opacity="0.7"/><ellipse cx="21.0" cy="73.4" rx="1.1" ry="1.38" fill="#2a6e96" fill-opacity="0.7"/><ellipse cx="18.0" cy="70.1" rx="1.1" ry="1.38" fill="#2a6e96" fill-opacity="0.7"/><ellipse cx="17.7" cy="65.0" rx="1.1" ry="1.38" fill="#2a6e96" fill-opacity="0.7"/><ellipse cx="20.1" cy="61.1" rx="1.1" ry="1.38" fill="#2a6e96" fill-opacity="0.7"/><ellipse cx="24.0" cy="60.6" rx="1.1" ry="1.38" fill="#2a6e96" fill-opacity="0.7"/><ellipse cx="27.0" cy="63.9" rx="1.1" ry="1.38" fill="#2a6e96" fill-opacity="0.7"/><ellipse cx="22.5" cy="67" rx="2.4" ry="3.2" fill="#3fb4ea"/><ellipse cx="30.7" cy="93.1" rx="1.1" ry="1.38" fill="#2a6e96" fill-opacity="0.7"/><ellipse cx="27.6" cy="98.3" rx="1.1" ry="1.38" fill="#2a6e96" fill-opacity="0.7"/><ellipse cx="22.7" cy="98.9" rx="1.1" ry="1.38" fill="#2a6e96" fill-opacity="0.7"/><ellipse cx="18.9" cy="94.6" rx="1.1" ry="1.38" fill="#2a6e96" fill-opacity="0.7"/><ellipse cx="18.5" cy="87.9" rx="1.1" ry="1.38" fill="#2a6e96" fill-opacity="0.7"/><ellipse cx="21.6" cy="82.7" rx="1.1" ry="1.38" fill="#2a6e96" fill-opacity="0.7"/><ellipse cx="26.5" cy="82.1" rx="1.1" ry="1.38" fill="#2a6e96" fill-opacity="0.7"/><ellipse cx="30.3" cy="86.4" rx="1.1" ry="1.38" fill="#2a6e96" fill-opacity="0.7"/><ellipse cx="24.6" cy="90.5" rx="3.2" ry="4.4" fill="#3fb4ea"/><ellipse cx="67.4" cy="71.6" rx="1.3" ry="1.62" fill="#8a6a2a" fill-opacity="0.8"/><ellipse cx="63.5" cy="76.3" rx="1.3" ry="1.62" fill="#8a6a2a" fill-opacity="0.8"/><ellipse cx="58.4" cy="74.2" rx="1.3" ry="1.62" fill="#8a6a2a" fill-opacity="0.8"/><ellipse cx="57.2" cy="67.6" rx="1.3" ry="1.62" fill="#8a6a2a" fill-opacity="0.8"/><ellipse cx="61.1" cy="62.9" rx="1.3" ry="1.62" fill="#8a6a2a" fill-opacity="0.8"/><ellipse cx="66.2" cy="65.0" rx="1.3" ry="1.62" fill="#8a6a2a" fill-opacity="0.8"/><ellipse cx="62.3" cy="69.6" rx="2.8" ry="3.6" fill="#f0963c"/><ellipse cx="56.8" cy="87.3" rx="1.2" ry="1.50" fill="#7a4220" fill-opacity="0.8"/><ellipse cx="53.9" cy="92.7" rx="1.2" ry="1.50" fill="#7a4220" fill-opacity="0.8"/><ellipse cx="49.3" cy="94.9" rx="1.2" ry="1.50" fill="#7a4220" fill-opacity="0.8"/><ellipse cx="44.6" cy="92.9" rx="1.2" ry="1.50" fill="#7a4220" fill-opacity="0.8"/><ellipse cx="41.7" cy="87.6" rx="1.2" ry="1.50" fill="#7a4220" fill-opacity="0.8"/><ellipse cx="41.6" cy="80.9" rx="1.2" ry="1.50" fill="#7a4220" fill-opacity="0.8"/><ellipse cx="44.5" cy="75.5" rx="1.2" ry="1.50" fill="#7a4220" fill-opacity="0.8"/><ellipse cx="49.1" cy="73.3" rx="1.2" ry="1.50" fill="#7a4220" fill-opacity="0.8"/><ellipse cx="53.8" cy="75.3" rx="1.2" ry="1.50" fill="#7a4220" fill-opacity="0.8"/><ellipse cx="56.7" cy="80.6" rx="1.2" ry="1.50" fill="#7a4220" fill-opacity="0.8"/><ellipse cx="49.2" cy="84.1" rx="4.4" ry="6" fill="#c4622c"/><ellipse cx="84.9" cy="15.8" rx="1.8" ry="2.25" fill="#6c7c88" fill-opacity="0.85"/><ellipse cx="81.4" cy="20.8" rx="1.8" ry="2.25" fill="#6c7c88" fill-opacity="0.85"/><ellipse cx="76.2" cy="20.3" rx="1.8" ry="2.25" fill="#6c7c88" fill-opacity="0.85"/><ellipse cx="73.3" cy="14.6" rx="1.8" ry="2.25" fill="#6c7c88" fill-opacity="0.85"/><ellipse cx="74.8" cy="8.0" rx="1.8" ry="2.25" fill="#6c7c88" fill-opacity="0.85"/><ellipse cx="79.7" cy="5.4" rx="1.8" ry="2.25" fill="#6c7c88" fill-opacity="0.85"/><ellipse cx="84.2" cy="8.9" rx="1.8" ry="2.25" fill="#6c7c88" fill-opacity="0.85"/><ellipse cx="79.2" cy="13.4" rx="3" ry="4" fill="#d4e6f0"/><ellipse cx="75.3" cy="23.0" rx="1.4" ry="1.75" fill="#6c7c88" fill-opacity="0.7"/><ellipse cx="70.9" cy="28.4" rx="1.4" ry="1.75" fill="#6c7c88" fill-opacity="0.7"/><ellipse cx="65.2" cy="26.0" rx="1.4" ry="1.75" fill="#6c7c88" fill-opacity="0.7"/><ellipse cx="63.9" cy="18.2" rx="1.4" ry="1.75" fill="#6c7c88" fill-opacity="0.7"/><ellipse cx="68.3" cy="12.8" rx="1.4" ry="1.75" fill="#6c7c88" fill-opacity="0.7"/><ellipse cx="74.0" cy="15.2" rx="1.4" ry="1.75" fill="#6c7c88" fill-opacity="0.7"/><ellipse cx="69.6" cy="20.6" rx="3" ry="4" fill="#d4e6f0"/><ellipse cx="98.2" cy="18.8" rx="1.9" ry="2.38" fill="#6c7c88" fill-opacity="0.85"/><ellipse cx="95.3" cy="23.7" rx="1.9" ry="2.38" fill="#6c7c88" fill-opacity="0.85"/><ellipse cx="90.7" cy="24.3" rx="1.9" ry="2.38" fill="#6c7c88" fill-opacity="0.85"/><ellipse cx="87.2" cy="20.2" rx="1.9" ry="2.38" fill="#6c7c88" fill-opacity="0.85"/><ellipse cx="86.8" cy="13.8" rx="1.9" ry="2.38" fill="#6c7c88" fill-opacity="0.85"/><ellipse cx="89.7" cy="8.9" rx="1.9" ry="2.38" fill="#6c7c88" fill-opacity="0.85"/><ellipse cx="94.3" cy="8.3" rx="1.9" ry="2.38" fill="#6c7c88" fill-opacity="0.85"/><ellipse cx="97.8" cy="12.4" rx="1.9" ry="2.38" fill="#6c7c88" fill-opacity="0.85"/><ellipse cx="92.5" cy="16.3" rx="3" ry="4.2" fill="#d4e6f0"/><ellipse cx="81.5" cy="52.9" rx="1.8" ry="2.25" fill="#6c7c88" fill-opacity="0.85"/><ellipse cx="78.6" cy="57.6" rx="1.8" ry="2.25" fill="#6c7c88" fill-opacity="0.85"/><ellipse cx="74.2" cy="58.1" rx="1.8" ry="2.25" fill="#6c7c88" fill-opacity="0.85"/><ellipse cx="70.7" cy="54.2" rx="1.8" ry="2.25" fill="#6c7c88" fill-opacity="0.85"/><ellipse cx="70.3" cy="48.1" rx="1.8" ry="2.25" fill="#6c7c88" fill-opacity="0.85"/><ellipse cx="73.2" cy="43.4" rx="1.8" ry="2.25" fill="#6c7c88" fill-opacity="0.85"/><ellipse cx="77.6" cy="42.9" rx="1.8" ry="2.25" fill="#6c7c88" fill-opacity="0.85"/><ellipse cx="81.1" cy="46.8" rx="1.8" ry="2.25" fill="#6c7c88" fill-opacity="0.85"/><ellipse cx="75.9" cy="50.5" rx="2.8" ry="3.8" fill="#d4e6f0"/><ellipse cx="88.0" cy="51.5" rx="1.6" ry="2.00" fill="#6c7c88" fill-opacity="0.8"/><ellipse cx="84.3" cy="56.5" rx="1.6" ry="2.00" fill="#6c7c88" fill-opacity="0.8"/><ellipse cx="79.5" cy="54.3" rx="1.6" ry="2.00" fill="#6c7c88" fill-opacity="0.8"/><ellipse cx="78.4" cy="47.1" rx="1.6" ry="2.00" fill="#6c7c88" fill-opacity="0.8"/><ellipse cx="82.1" cy="42.1" rx="1.6" ry="2.00" fill="#6c7c88" fill-opacity="0.8"/><ellipse cx="86.9" cy="44.3" rx="1.6" ry="2.00" fill="#6c7c88" fill-opacity="0.8"/><ellipse cx="83.2" cy="49.3" rx="2.2" ry="3.2" fill="#d4e6f0"/><ellipse cx="99.1" cy="48.5" rx="1.7" ry="2.12" fill="#6c7c88" fill-opacity="0.8"/><ellipse cx="95.6" cy="54.1" rx="1.7" ry="2.12" fill="#6c7c88" fill-opacity="0.8"/><ellipse cx="90.4" cy="53.5" rx="1.7" ry="2.12" fill="#6c7c88" fill-opacity="0.8"/><ellipse cx="87.5" cy="47.2" rx="1.7" ry="2.12" fill="#6c7c88" fill-opacity="0.8"/><ellipse cx="89.0" cy="39.9" rx="1.7" ry="2.12" fill="#6c7c88" fill-opacity="0.8"/><ellipse cx="93.9" cy="37.1" rx="1.7" ry="2.12" fill="#6c7c88" fill-opacity="0.8"/><ellipse cx="98.4" cy="40.9" rx="1.7" ry="2.12" fill="#6c7c88" fill-opacity="0.8"/><ellipse cx="93.4" cy="45.9" rx="3" ry="4.4" fill="#d4e6f0"/><ellipse cx="81.5" cy="87.7" rx="1.9" ry="2.38" fill="#6c7c88" fill-opacity="0.85"/><ellipse cx="78.6" cy="92.4" rx="1.9" ry="2.38" fill="#6c7c88" fill-opacity="0.85"/><ellipse cx="74.2" cy="92.9" rx="1.9" ry="2.38" fill="#6c7c88" fill-opacity="0.85"/><ellipse cx="70.7" cy="89.0" rx="1.9" ry="2.38" fill="#6c7c88" fill-opacity="0.85"/><ellipse cx="70.3" cy="82.9" rx="1.9" ry="2.38" fill="#6c7c88" fill-opacity="0.85"/><ellipse cx="73.2" cy="78.2" rx="1.9" ry="2.38" fill="#6c7c88" fill-opacity="0.85"/><ellipse cx="77.6" cy="77.7" rx="1.9" ry="2.38" fill="#6c7c88" fill-opacity="0.85"/><ellipse cx="81.1" cy="81.6" rx="1.9" ry="2.38" fill="#6c7c88" fill-opacity="0.85"/><ellipse cx="75.9" cy="85.3" rx="2.8" ry="3.8" fill="#d4e6f0"/><ellipse cx="96.5" cy="91.6" rx="1.8" ry="2.25" fill="#6c7c88" fill-opacity="0.85"/><ellipse cx="93.8" cy="96.1" rx="1.8" ry="2.25" fill="#6c7c88" fill-opacity="0.85"/><ellipse cx="89.7" cy="96.6" rx="1.8" ry="2.25" fill="#6c7c88" fill-opacity="0.85"/><ellipse cx="86.5" cy="92.9" rx="1.8" ry="2.25" fill="#6c7c88" fill-opacity="0.85"/><ellipse cx="86.1" cy="87.2" rx="1.8" ry="2.25" fill="#6c7c88" fill-opacity="0.85"/><ellipse cx="88.8" cy="82.7" rx="1.8" ry="2.25" fill="#6c7c88" fill-opacity="0.85"/><ellipse cx="92.9" cy="82.2" rx="1.8" ry="2.25" fill="#6c7c88" fill-opacity="0.85"/><ellipse cx="96.1" cy="85.9" rx="1.8" ry="2.25" fill="#6c7c88" fill-opacity="0.85"/><ellipse cx="91.3" cy="89.4" rx="2.6" ry="3.6" fill="#d4e6f0"/></g></g></svg></td><td>2025-01-21</td><td>IP地址6</td><td>源端口号6</td><td>ICMP</td><td>异常</td><td>6</td><td>6</td><td>6</td><td>6</td><td>6</td><td><span class="op" style="margin-left:0">查看</span><span class="op">修改</span><span class="op">删除</span></td></tr>
<tr><td><span class="cb"></span></td><td>4</td><td>采集标题5</td><td>设备标题5</td><td><svg class="pic" viewBox="0 0 100 100" preserveAspectRatio="none" style="height:98px"><defs><linearGradient id="p4a" x1="0" y1="0" x2="0" y2="1"><stop offset="0" stop-color="#0b1a86"/><stop offset=".4" stop-color="#1a2aa0"/><stop offset=".55" stop-color="#6a4a8a"/><stop offset=".62" stop-color="#6e6478"/><stop offset="1" stop-color="#262840"/></linearGradient><linearGradient id="p4r" x1="0" y1="0" x2="0" y2="1"><stop offset="0" stop-color="#8a7f92"/><stop offset=".45" stop-color="#4f4d6c"/><stop offset="1" stop-color="#23253d"/></linearGradient><filter id="p4f" x="-10%" y="-10%" width="120%" height="120%"><feGaussianBlur stdDeviation=".65"/></filter><filter id="p4g"><feGaussianBlur stdDeviation=".45"/></filter><clipPath id="p4c"><rect width="100" height="100"/></clipPath></defs><g clip-path="url(#p4c)"><rect width="100" height="100" fill="url(#p4a)"/><g filter="url(#p4f)"><path d="M50 55 L0 82 L0 100 L100 100 L100 86 Z" fill="url(#p4r)"/><path d="M50 56 L22 100 L30 100 Z" fill="#9a94b0" fill-opacity=".35"/><path d="M50 56 L46 100 L54 100 Z" fill="#8a5a6a" fill-opacity=".45"/><path d="M50 56 L66 100 L76 100 Z" fill="#8c8aa8" fill-opacity=".3"/><path d="M50 56 L0 88 L0 84 Z" fill="#b8a8b8" fill-opacity=".4"/><path d="M50 56 L48 100 L50 100 Z" fill="#c8a040" fill-opacity=".5"/><path d="M0 0 L17 0 L17 52 L0 60 Z" fill="#34389a"/><path d="M0 8 L17 2 M0 14 L17 8 M0 20 L17 14 M0 26 L17 21" stroke="#6f78d0" stroke-width="1.2" fill="none" stroke-opacity=".7"/><path d="M0 28 L16 31 L16 66 L0 74 Z" fill="#6a4cae"/><path d="M0 25 L8 27 L8 30 L0 29 Z" fill="#3aa0e8"/><path d="M2 36 v28 M6 36 v26 M10 36 v24 M14 36 v22" stroke="#8a6cd0" stroke-width="1" fill="none"/><path d="M18 0 L35 0 L36 56 L18 54 Z" fill="#2e2f94"/><path d="M20 2 v48 M24 2 v48 M28 2 v48 M32 2 v50" stroke="#8a8ae0" stroke-width=".8" stroke-opacity=".75" fill="none"/><path d="M23 18 L31 18 L31 46 L23 46 Z" fill="#152a6a" fill-opacity=".7"/><path d="M18 46 L30 48 L30 52 L18 50 Z" fill="#3a8cd8"/><path d="M37 14 L39.5 8 L43 14 L45 52 L36 54 Z" fill="#a8bdea"/><path d="M38 16 v34 M41 14 v36 M43.5 18 v32" stroke="#e6eefc" stroke-width=".7" stroke-opacity=".8" fill="none"/><path d="M47 24 L52.5 24 L53 54 L46.5 54 Z" fill="#8ea0dc"/><path d="M48.5 26 v26 M51 26 v26" stroke="#dfe8fa" stroke-width=".6" fill="none" stroke-opacity=".8"/><path d="M69.5 0 L76.5 0 L78 52 L69 52 Z" fill="#93a8d8"/><path d="M71 2 v48 M73.4 2 v48 M75.6 2 v48" stroke="#e8eefa" stroke-width=".6" stroke-opacity=".85" fill="none"/><path d="M88 0 L100 0 L100 42 L88 40 Z" fill="#2a4a9a"/><path d="M89.5 3 L98 1 L98 10 L89.5 12 Z M89.5 15 L98 13.5 L98 23 L89.5 24.5 Z M89.5 27.5 L98 26 L98 36 L89.5 37.5 Z" fill="#d4e2f2"/><path d="M84 44 L100 40 L100 70 L84 64 Z" fill="#27a0d8"/><path d="M87 50 L100 48 L100 54 L87 55 Z" fill="#165a9a"/><path d="M64 58 L84 58 L84 68 L64 64 Z" fill="#2f74b8"/><path d="M79 44 L88 42 L88 50 L79 50 Z" fill="#d08a7a" fill-opacity=".8"/><path d="M62 50 L84 50 L84 58 L62 60 Z" fill="#2a4a4a" fill-opacity=".85"/><ellipse cx="16.7" cy="54" rx="3" ry="4" fill="#f2d890" fill-opacity=".85"/><ellipse cx="30.4" cy="54.5" rx="2.6" ry="3.4" fill="#f0c8a0" fill-opacity=".9"/><ellipse cx="67.3" cy="50" rx="2.4" ry="3.2" fill="#f2d890" fill-opacity=".9"/><ellipse cx="50" cy="57" rx="9" ry="3" fill="#e8b860" fill-opacity=".7"/><ellipse cx="57" cy="56" rx="2" ry="4" fill="#d8c040" fill-opacity=".7"/><path d="M0 66 L10 62 L10 78 L0 82 Z" fill="#3a4a2a" fill-opacity=".8"/><path d="M0 48 L4 47 L4 60 L0 62 Z" fill="#d8c8a0" fill-opacity=".8"/><path d="M52 34 L68 44 M52 40 L66 36 M54 46 L68 40" stroke="#d05a7a" stroke-width=".6" stroke-opacity=".7" fill="none"/></g><g filter="url(#p4g)" fill="none" stroke="#e6ecfa" stroke-width="1"><ellipse cx="26.7" cy="12.7" rx="3.4" ry="4.4"/><ellipse cx="49.8" cy="26.6" rx="3.6" ry="4.8"/><ellipse cx="75.4" cy="33" rx="2.6" ry="3.6"/><ellipse cx="30.4" cy="54.5" rx="3.4" ry="4.4"/><ellipse cx="67.3" cy="49.8" rx="2.8" ry="3.8" stroke-opacity=".6"/><g fill="#e6ecfa" stroke="none"><ellipse cx="26.7" cy="12.7" rx="1.3" ry="1.8"/><path d="M48 28.6 l1.8 -4.4 l1.8 4.4 z"/><ellipse cx="75.4" cy="33" rx="1.2" ry="1.7"/></g></g></g></svg></td><td>2025-01-21</td><td>IP地址5</td><td>源端口号5</td><td>TCP</td><td>正常</td><td>5</td><td>5</td><td>5</td><td>5</td><td>5</td><td><span class="op" style="margin-left:0">查看</span><span class="op">修改</span><span class="op">删除</span></td></tr>
<tr><td><span class="cb"></span></td><td>5</td><td>采集标题4</td><td>设备标题4</td><td><svg class="pic" viewBox="0 0 100 100" preserveAspectRatio="none" style="height:98px"><defs><linearGradient id="p5a" x1="0" y1="0" x2="0" y2="1"><stop offset="0" stop-color="#0b1a86"/><stop offset=".4" stop-color="#1a2aa0"/><stop offset=".55" stop-color="#6a4a8a"/><stop offset=".62" stop-color="#6e6478"/><stop offset="1" stop-color="#262840"/></linearGradient><linearGradient id="p5r" x1="0" y1="0" x2="0" y2="1"><stop offset="0" stop-color="#8a7f92"/><stop offset=".45" stop-color="#4f4d6c"/><stop offset="1" stop-color="#23253d"/></linearGradient><filter id="p5f" x="-10%" y="-10%" width="120%" height="120%"><feGaussianBlur stdDeviation=".65"/></filter><filter id="p5g"><feGaussianBlur stdDeviation=".45"/></filter><clipPath id="p5c"><rect width="100" height="100"/></clipPath></defs><g clip-path="url(#p5c)"><rect width="100" height="100" fill="url(#p5a)"/><g filter="url(#p5f)"><path d="M50 55 L0 82 L0 100 L100 100 L100 86 Z" fill="url(#p5r)"/><path d="M50 56 L22 100 L30 100 Z" fill="#9a94b0" fill-opacity=".35"/><path d="M50 56 L46 100 L54 100 Z" fill="#8a5a6a" fill-opacity=".45"/><path d="M50 56 L66 100 L76 100 Z" fill="#8c8aa8" fill-opacity=".3"/><path d="M50 56 L0 88 L0 84 Z" fill="#b8a8b8" fill-opacity=".4"/><path d="M50 56 L48 100 L50 100 Z" fill="#c8a040" fill-opacity=".5"/><path d="M0 0 L17 0 L17 52 L0 60 Z" fill="#34389a"/><path d="M0 8 L17 2 M0 14 L17 8 M0 20 L17 14 M0 26 L17 21" stroke="#6f78d0" stroke-width="1.2" fill="none" stroke-opacity=".7"/><path d="M0 28 L16 31 L16 66 L0 74 Z" fill="#6a4cae"/><path d="M0 25 L8 27 L8 30 L0 29 Z" fill="#3aa0e8"/><path d="M2 36 v28 M6 36 v26 M10 36 v24 M14 36 v22" stroke="#8a6cd0" stroke-width="1" fill="none"/><path d="M18 0 L35 0 L36 56 L18 54 Z" fill="#2e2f94"/><path d="M20 2 v48 M24 2 v48 M28 2 v48 M32 2 v50" stroke="#8a8ae0" stroke-width=".8" stroke-opacity=".75" fill="none"/><path d="M23 18 L31 18 L31 46 L23 46 Z" fill="#152a6a" fill-opacity=".7"/><path d="M18 46 L30 48 L30 52 L18 50 Z" fill="#3a8cd8"/><path d="M37 14 L39.5 8 L43 14 L45 52 L36 54 Z" fill="#a8bdea"/><path d="M38 16 v34 M41 14 v36 M43.5 18 v32" stroke="#e6eefc" stroke-width=".7" stroke-opacity=".8" fill="none"/><path d="M47 24 L52.5 24 L53 54 L46.5 54 Z" fill="#8ea0dc"/><path d="M48.5 26 v26 M51 26 v26" stroke="#dfe8fa" stroke-width=".6" fill="none" stroke-opacity=".8"/><path d="M69.5 0 L76.5 0 L78 52 L69 52 Z" fill="#93a8d8"/><path d="M71 2 v48 M73.4 2 v48 M75.6 2 v48" stroke="#e8eefa" stroke-width=".6" stroke-opacity=".85" fill="none"/><path d="M88 0 L100 0 L100 42 L88 40 Z" fill="#2a4a9a"/><path d="M89.5 3 L98 1 L98 10 L89.5 12 Z M89.5 15 L98 13.5 L98 23 L89.5 24.5 Z M89.5 27.5 L98 26 L98 36 L89.5 37.5 Z" fill="#d4e2f2"/><path d="M84 44 L100 40 L100 70 L84 64 Z" fill="#27a0d8"/><path d="M87 50 L100 48 L100 54 L87 55 Z" fill="#165a9a"/><path d="M64 58 L84 58 L84 68 L64 64 Z" fill="#2f74b8"/><path d="M79 44 L88 42 L88 50 L79 50 Z" fill="#d08a7a" fill-opacity=".8"/><path d="M62 50 L84 50 L84 58 L62 60 Z" fill="#2a4a4a" fill-opacity=".85"/><ellipse cx="16.7" cy="54" rx="3" ry="4" fill="#f2d890" fill-opacity=".85"/><ellipse cx="30.4" cy="54.5" rx="2.6" ry="3.4" fill="#f0c8a0" fill-opacity=".9"/><ellipse cx="67.3" cy="50" rx="2.4" ry="3.2" fill="#f2d890" fill-opacity=".9"/><ellipse cx="50" cy="57" rx="9" ry="3" fill="#e8b860" fill-opacity=".7"/><ellipse cx="57" cy="56" rx="2" ry="4" fill="#d8c040" fill-opacity=".7"/><path d="M0 66 L10 62 L10 78 L0 82 Z" fill="#3a4a2a" fill-opacity=".8"/><path d="M0 48 L4 47 L4 60 L0 62 Z" fill="#d8c8a0" fill-opacity=".8"/><path d="M52 34 L68 44 M52 40 L66 36 M54 46 L68 40" stroke="#d05a7a" stroke-width=".6" stroke-opacity=".7" fill="none"/></g><g filter="url(#p5g)" fill="none" stroke="#e6ecfa" stroke-width="1"><ellipse cx="26.7" cy="12.7" rx="3.4" ry="4.4"/><ellipse cx="49.8" cy="26.6" rx="3.6" ry="4.8"/><ellipse cx="75.4" cy="33" rx="2.6" ry="3.6"/><ellipse cx="30.4" cy="54.5" rx="3.4" ry="4.4"/><ellipse cx="67.3" cy="49.8" rx="2.8" ry="3.8" stroke-opacity=".6"/><g fill="#e6ecfa" stroke="none"><ellipse cx="26.7" cy="12.7" rx="1.3" ry="1.8"/><path d="M48 28.6 l1.8 -4.4 l1.8 4.4 z"/><ellipse cx="75.4" cy="33" rx="1.2" ry="1.7"/></g></g></g></svg></td><td>2025-01-21</td><td>IP地址4</td><td>源端口号4</td><td>TCP</td><td>正常</td><td>4</td><td>4</td><td>4</td><td>4</td><td>4</td><td><span class="op" style="margin-left:0">查看</span><span class="op">修改</span><span class="op">删除</span></td></tr>
</tbody></table>
<div id="ll"></div>
<div id="sb"><div class="up"></div><div class="thumb"></div></div>
<div id="dl"><div class="in"></div><svg viewBox="0 0 18 15"><path d="M9 0.4 L17.7 14.8 L0.3 14.8 Z" fill="#474747"/><rect x="8.2" y="5.4" width="1.6" height="5" fill="#f1f1f1"/><rect x="8.2" y="11.4" width="1.6" height="1.7" fill="#f1f1f1"/></svg><div class="n">流量检测.xls</div><div class="s">7.1 KB • 完成</div><div class="bar"></div></div>
<svg id="cursor" viewBox="0 0 14 21"><path d="M1 1 L1 17.2 L4.9 13.6 L7.6 19.8 L10.2 18.7 L7.5 12.6 L12.6 12.6 Z" fill="#fff" stroke="#111" stroke-width="1.1" stroke-linejoin="miter"/></svg>
<div id="ime"><span class="zh">中</span>
<svg style="position:absolute;left:36px;top:7px;width:16px;height:16px" viewBox="0 0 16 16"><circle cx="3.4" cy="4.6" r="1.7" fill="none" stroke="#1c6dd6" stroke-width="1.5"/><path d="M9.2 5.6 h2.6 q.4 3 -2 5.2 l-1 -.6 q1.2 -1.4 .4 -2.2 z" fill="#1c6dd6"/></svg>
<svg style="position:absolute;left:59px;top:5px;width:13px;height:18px" viewBox="0 0 13 18" fill="none" stroke="#1c6dd6" stroke-width="1.5" stroke-linecap="round"><rect x="3.8" y="0.8" width="5.4" height="9.6" rx="2.7" fill="#1c6dd6"/><path d="M1 8.4 q0 5 5.5 5 q5.5 0 5.5 -5 M6.5 13.6 v3.4"/></svg>
<svg style="position:absolute;left:82px;top:7px;width:16px;height:13px" viewBox="0 0 16 13"><rect x="0" y="0" width="16" height="12.4" rx="2" fill="#1c6dd6"/><path d="M2.6 3 h1.8 M5.7 3 h1.8 M8.8 3 h1.8 M11.9 3 h1.8 M2.6 6 h1.8 M5.7 6 h1.8 M8.8 6 h1.8 M11.9 6 h1.8 M2.6 9.2 h1.8 M5.7 9.2 h4.9 M11.9 9.2 h1.8" stroke="#fff" stroke-width="1.5"/></svg>
<svg style="position:absolute;left:105px;top:1px;width:20px;height:22px" viewBox="0 0 20 22"><linearGradient id="sh" x1="0" y1="0" x2="0" y2="1"><stop offset="0" stop-color="#e85a6a"/><stop offset=".5" stop-color="#b866d8"/><stop offset="1" stop-color="#7c7cf0"/></linearGradient><path d="M1.6 9 L5.6 6.4 Q9 9 12.4 6.4 L16.4 9 L14.8 12 L13 11.2 L13 21 L5 21 L5 11.2 L3.2 12 Z" fill="url(#sh)"/><circle cx="16.6" cy="3.6" r="2.6" fill="#f0522a"/></svg>
<svg style="position:absolute;left:131px;top:7px;width:13px;height:14px" viewBox="0 0 13 14" fill="#1c6dd6"><rect x="0" y="0" width="5.8" height="5.8" rx="1.6"/><rect x="7.2" y="0" width="5.8" height="5.8" rx="2.9"/><rect x="0" y="7.2" width="5.8" height="6.8" rx="1.6"/><rect x="7.2" y="7.2" width="5.8" height="6.8" rx="1.6"/></svg>
<svg style="position:absolute;left:153px;top:4px;width:16px;height:20px" viewBox="0 0 16 20"><ellipse cx="8" cy="10.5" rx="7" ry="8.4" fill="#fff" stroke="#c9a6e0" stroke-width="1"/><path d="M2.4 4.4 L4.2 1.2 L6.6 3.4 Z M13.6 4.4 L11.8 1.2 L9.4 3.4 Z" fill="#f6d0dc"/><rect x="2.4" y="8" width="11.2" height="4.4" rx="1.4" fill="#e87a22"/><rect x="4" y="9" width="8" height="1.6" fill="#fff0d0"/><rect x="5.4" y="12.4" width="5.2" height="2.6" rx="1" fill="#3a3a44"/></svg>
</div>
<svg id="sogou" viewBox="0 0 34 34"><path d="M2 7.4 Q1.4 4.6 4 4 L22.6 0.6 Q25.6 0.2 26.2 3 L32 31 L7 34 Z" fill="#f2602b"/><text x="2" y="30" font-family="Liberation Sans, sans-serif" font-size="30" font-weight="700" font-style="italic" fill="#fff" transform="rotate(-10 17 17) scale(1.18 1)">S</text></svg>
</body>
</html>
